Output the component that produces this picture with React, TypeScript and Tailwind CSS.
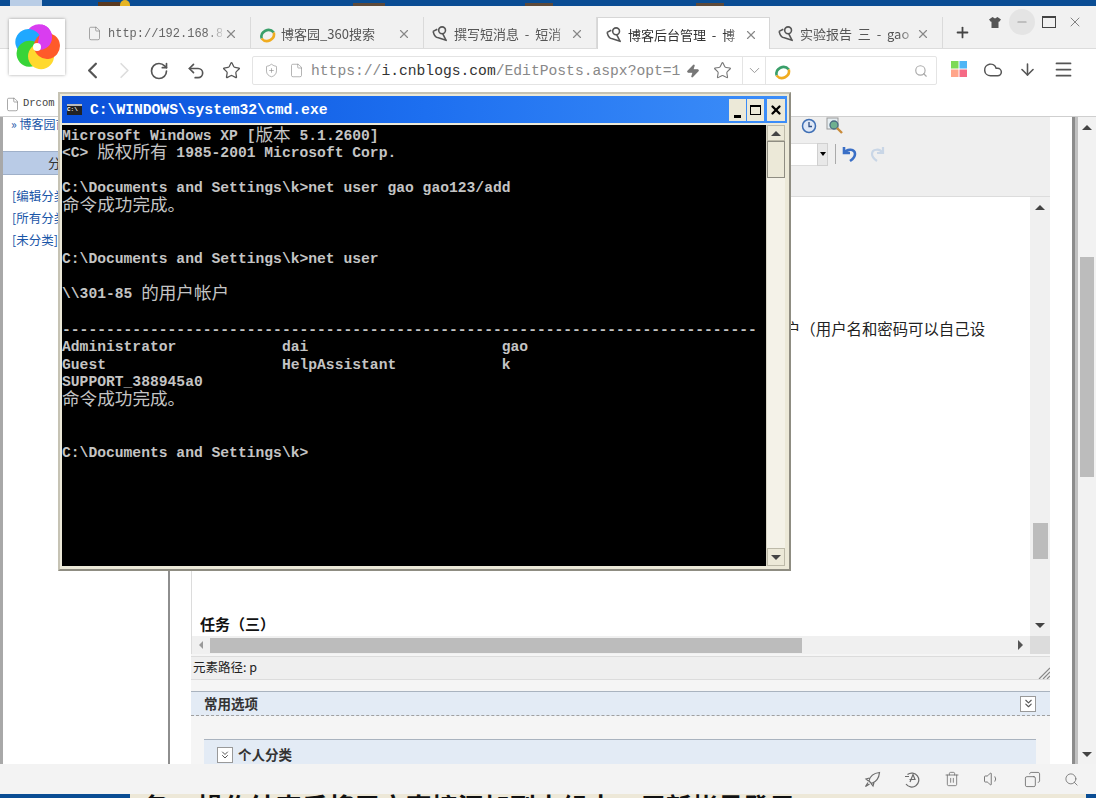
import { ArrowDown, ChevronDown, ChevronLeft, ChevronRight, ChevronsDown, Cloud, Copy, File, Menu, Minus, Plus, RotateCw, Search, ShieldPlus, Star, Trash2, Undo2, Volume1, X, Zap } from "lucide-react";
import type { ReactNode } from "react";

const cjk = "font-['Noto_Sans_CJK_SC',sans-serif]";

// swirl logo of the browser
const Logo = () => (
  <svg width="48" height="48" viewBox="-24 -24 48 48">
    <g transform="rotate(12)">
      {[
        ["#d93df0", 0],
        ["#1fa8ff", -72],
        ["#38d438", -144],
        ["#ffd92e", 144],
        ["#ff5a2a", 72],
      ].map(([c, a]) => (
        <circle key={c} cx="0" cy="-10" r="13" fill={c as string} transform={`rotate(${a})`} />
      ))}
      <path d="M0 -23 A13 13 0 0 1 0 3 Z" fill="#d93df0" />
    </g>
    <circle r="4" fill="#fff" />
  </svg>
);

const CnblogsIcon = () => (
  <svg width="17" height="17" viewBox="0 0 16 16" fill="none" stroke="#555" strokeWidth="1.5">
    <circle cx="9.5" cy="5" r="3.2" />
    <path d="M1 6 C2 10 4 12 6 12 L14 14.5" />
    <path d="M10 8 L13 14" />
    <path d="M1 6 L5 4" />
  </svg>
);

const SearchRing = ({ size = 18 }: { size?: number }) => (
  <svg width={size} height={size} viewBox="0 0 18 18" fill="none" strokeWidth="2.6">
    <path d="M3.6 13.5 A7 7 0 0 1 15.8 7.5" stroke="#3a9f6a" />
    <path d="M15.8 7.5 A7 7 0 0 1 3.6 13.5" stroke="#f0ac20" />
  </svg>
);

const Tab = ({ icon, title, active, mono }: { icon: ReactNode; title: string; active?: boolean; mono?: boolean }) => (
  <div className={`flex items-center w-[173px] h-[31px] shrink-0 pt-[2px] ${active ? "bg-white border border-b-0 border-[#d6d6d6] -mb-px h-[32px]" : "border-r border-[#dadada]"}`}>
    <div className="w-[30px] flex justify-center pl-[2px] shrink-0">{icon}</div>
    <div className={`w-[114px] overflow-hidden whitespace-pre [mask-image:linear-gradient(to_right,black_86%,rgba(0,0,0,0.25))] ${mono ? "font-['Liberation_Mono',monospace] text-[12px] text-[#666]" : `${cjk} text-[13px] ${active ? "text-[#333]" : "text-[#555]"}`}`}>
      {title}
    </div>
    <X size={14} className="ml-[2px] text-[#888] shrink-0" />
  </div>
);

const TopStrip = () => (
  <div className="flex items-end h-[6px] shrink-0 bg-[#0a4d94] overflow-hidden">
    <div className="ml-[10px] w-[32px] h-[6px] bg-[#b9cde6]" />
    <div className="ml-[56px] w-[22px] h-[4px] bg-[#5a3a20]" />
    <div className="w-[10px] h-[6px] bg-[#e6b422] rounded-t-full" />
    <div className="ml-[223px] w-[32px] h-[3px] bg-[#5e4a3a]" />
    <div className="ml-[140px] w-[28px] h-[3px] bg-[#5e4a3a]" />
    <div className="ml-[143px] w-[28px] h-[3px] bg-[#5e4a3a]" />
  </div>
);

const TabBar = () => (
  <div className="flex items-end h-[43px] shrink-0 pl-[78px] bg-[#f1f1f1] border-b border-[#dcdcdc]">
    <Tab mono title="http://192.168.8" icon={<File size={15} strokeWidth={1} className="text-[#777]" />} />
    <Tab title="博客园_360搜索" icon={<SearchRing />} />
    <Tab title="撰写短消息  -  短消" icon={<CnblogsIcon />} />
    <Tab active title="博客后台管理  -  博" icon={<CnblogsIcon />} />
    <Tab title="实验报告  三  -  gao" icon={<CnblogsIcon />} />
    <div className="w-[38px] h-[31px] flex justify-center items-center">
      <Plus size={17} strokeWidth={2.5} className="text-[#444]" />
    </div>
    <div className="flex items-center self-start mt-[3px] h-[26px] flex-1">
      <svg width="12" height="11" viewBox="0 0 12 11" className="ml-[8px]">
        <path d="M3.5 0 L6 1.5 L8.5 0 L12 2.5 L10 5 L9.5 4.5 V11 H2.5 V4.5 L2 5 L0 2.5Z" fill="#555" />
      </svg>
      <div className="ml-[8px] w-[26px] h-[26px] rounded-full bg-[#e4e4e4] flex items-center justify-center">
        <Minus size={14} className="text-[#999]" />
      </div>
      <div className="ml-[7px] w-[14px] h-[12px] border border-t-2 border-[#444]" />
      <X size={16} strokeWidth={1.2} className="ml-[11px] text-[#666]" />
    </div>
  </div>
);

const ToolBar = () => (
  <div className="flex items-center h-[43px] shrink-0 bg-white pl-[78px]">
    <div className="w-[28px] flex justify-center"><ChevronLeft size={27} strokeWidth={2} className="text-[#555]" /></div>
    <div className="w-[36px] flex justify-center"><ChevronRight size={27} strokeWidth={1.5} className="text-[#ddd]" /></div>
    <div className="w-[34px] flex justify-center"><RotateCw size={20} strokeWidth={2} className="text-[#555]" /></div>
    <div className="w-[40px] flex justify-center"><Undo2 size={20} strokeWidth={2} className="text-[#555]" /></div>
    <div className="w-[30px] flex justify-center"><Star size={19} strokeWidth={1.6} className="text-[#555]" /></div>
    <div className="ml-[6px] flex items-center h-[29px] w-[685px] border border-[#e4e4e4] rounded-[2px]">
      <ShieldPlus size={15} strokeWidth={1} className="ml-[11px] text-[#888]" />
      <File size={15} strokeWidth={1} className="ml-[10px] text-[#888]" />
      <div className="ml-[7px] w-[370px] whitespace-nowrap font-['Liberation_Mono',monospace] text-[14.67px] text-[#888]">
        https://<span className="text-[#333]">i.cnblogs.com</span>/EditPosts.aspx?opt=1
      </div>
      <Zap size={14} className="ml-[5px] text-[#777] fill-[#777]" />
      <Star size={19} strokeWidth={1.4} className="ml-[13px] text-[#777]" />
      <div className="ml-[10px] w-[24px] h-full shrink-0 border-x border-[#e4e4e4] flex items-center justify-center">
        <ChevronDown size={17} strokeWidth={1.4} className="text-[#999]" />
      </div>
      <div className="ml-[7px]"><SearchRing /></div>
      <Search size={14} className="ml-auto mr-[8px] text-[#aaa]" />
    </div>
    <svg width="16" height="16" viewBox="0 0 16 16" className="ml-[14px] -mt-[3px]">
      <rect width="7.5" height="7.5" fill="#7ed957" />
      <rect x="8.5" width="7.5" height="7.5" fill="#4fb5f5" />
      <rect y="8.5" width="7.5" height="7.5" fill="#ffa58a" />
      <rect x="8.5" y="8.5" width="7.5" height="7.5" fill="#f56a85" />
    </svg>
    <Cloud size={20} strokeWidth={1.8} className="ml-[16px] -mt-[2px] text-[#555]" />
    <ArrowDown size={19} strokeWidth={2} className="ml-[15px] -mt-[2px] text-[#555]" />
    <Menu size={21} strokeWidth={2} className="ml-[16px] -mt-[2px] text-[#555]" />
  </div>
);

const Sidebar = () => (
  <div className="w-[170px] shrink-0 border-l-[3px] border-r-2 border-l-[#a8a8a8] border-r-[#8e8e8e] bg-white">
    <div className={`h-[34px] pl-[8px] pt-px text-[12px] leading-[11px] text-[#1a56a8] ${cjk}`}>» 博客园首页</div>
    <div className={`h-[24px] pl-[45px] flex items-center bg-[#b9cbe6] border-y border-[#9fb0c9] text-[13px] text-[#333] ${cjk}`}>分类管理</div>
    <div className={`mt-[12px] pl-[9px] flex flex-col gap-[4px] text-[12.5px] leading-[18px] text-[#1a56a8] ${cjk}`}>
      <div>[编辑分类]</div>
      <div>[所有分类]</div>
      <div>[未分类]</div>
    </div>
  </div>
);

const EditorToolbar = () => (
  <div className="h-[80px] shrink-0 bg-[#efefef] border-b border-[#dcdcdc] flex flex-col items-end pr-[206px]">
    <div className="h-[17px] flex items-center">
      <div className="w-[5px] h-[16px] bg-[#9fb2c9] mr-[12px]" />
      <svg width="16" height="16" viewBox="0 0 16 16" fill="none" className="mr-[9px]">
        <circle cx="8" cy="8" r="6.5" fill="#dfe8f6" stroke="#3f6fb5" strokeWidth="1.5" />
        <path d="M8 4 V8.5 H11" stroke="#2f4f86" strokeWidth="1.3" />
      </svg>
      <svg width="18" height="18" viewBox="0 0 18 18" fill="none">
        <rect x="1" y="1" width="11" height="11" fill="#e6eef2" stroke="#999" />
        <circle cx="8" cy="8" r="4" fill="#6fb08f" stroke="#4a6a80" strokeWidth="1.3" />
        <path d="M11 11 L16 16" stroke="#c98b3a" strokeWidth="2.4" />
      </svg>
    </div>
    <div className="mt-[8px] h-[24px] flex items-center mr-[-42px]">
      <div className="w-[60px] h-[23px] bg-white border-y border-[#ddd]" />
      <div className="w-[11px] h-[23px] bg-[#e8e8e8] border border-[#d0d0d0] flex items-center justify-center">
        <div className="border-x-[3px] border-x-transparent border-t-[4px] border-t-black" />
      </div>
      <div className="ml-[7px] w-px h-[20px] bg-[#aaa]" />
      <svg width="18" height="18" viewBox="0 0 18 18" fill="none" className="ml-[5px]">
        <path d="M3 2 V8 H9 M3.5 8 C6 3 14 4 14 9 C14 12 12 14 9 16" stroke="#3a6fc6" strokeWidth="2.6" />
      </svg>
      <svg width="18" height="18" viewBox="0 0 18 18" fill="none" className="ml-[9px]">
        <path d="M15 2 V8 H9 M14.5 8 C12 3 4 4 4 9 C4 12 6 14 9 16" stroke="#c9d6e6" strokeWidth="2.2" />
      </svg>
    </div>
  </div>
);

const Arrow = ({ dir }: { dir: "up" | "down" | "left" | "right" }) => {
  if (dir === "up") return <div className="border-x-[5px] border-x-transparent border-b-[5px] border-b-[#444]" />;
  if (dir === "down") return <div className="border-x-[5px] border-x-transparent border-t-[5px] border-t-[#444]" />;
  if (dir === "left") return <div className="border-y-[4px] border-y-transparent border-r-[4px] border-r-[#999]" />;
  return <div className="border-y-[5px] border-y-transparent border-l-[5px] border-l-[#555]" />;
};

const Editor = () => (
  <div className="w-[859px] shrink-0 flex flex-col bg-[#f5f5f5] overflow-hidden">
    <EditorToolbar />
    <div className="h-[439px] shrink-0 flex border-l border-[#dcdcdc]">
      <div className={`flex-1 bg-white flex flex-col justify-between pt-[120px] pb-px ${cjk}`}>
        <div className="pl-[516px] whitespace-nowrap text-[15.4px] leading-[22px] text-[#222]">创建一个用户（用户名和密码可以自己设</div>
        <div className="pl-[8px] text-[15px] leading-[22px] font-bold text-[#111]">任务（三）</div>
      </div>
      <div className="w-[20px] shrink-0 bg-[#f0f0f0] flex flex-col items-center py-[8px]">
        <Arrow dir="up" />
        <div className="mt-[313px] w-[15px] h-[36px] bg-[#bcbcbc]" />
        <div className="mt-auto"><Arrow dir="down" /></div>
      </div>
    </div>
    <div className="h-[18px] shrink-0 flex items-center bg-[#f0f0f0] border-l border-[#dcdcdc]">
      <div className="w-[18px] flex justify-center"><Arrow dir="left" /></div>
      <div className="w-[592px] h-[15px] bg-[#bcbcbc]" />
      <div className="ml-auto mr-[7px]"><Arrow dir="right" /></div>
      <div className="w-[20px] h-full bg-[#dcdcdc]" />
    </div>
    <div className={`mt-[2px] h-[24px] shrink-0 flex items-center justify-between bg-[#efefef] border-y border-[#dcdcdc] text-[12.5px] text-[#222] ${cjk}`}>
      <span className="pl-[2px] -mt-[2px]">元素路径: p</span>
      <svg width="12" height="12" viewBox="0 0 12 12" stroke="#888" strokeWidth="1.2" className="self-end">
        <path d="M1 12 L12 1 M5 12 L12 5 M9 12 L12 9" />
      </svg>
    </div>
    <div className={`mt-[11px] h-[25px] shrink-0 flex items-center justify-between bg-[#e3ebf5] border-y border-dashed [border-top-style:solid] border-t-[#a9b3bf] border-b-[#a0a0a0] pl-[13px] pr-[14px] text-[13.5px] font-bold text-[#333] ${cjk}`}>
      <span>常用选项</span>
      <span className="w-[16px] h-[16px] bg-white border border-[#999] flex items-center justify-center">
        <ChevronsDown size={13} className="text-[#555]" />
      </span>
    </div>
    <div className={`mt-[23px] ml-[13px] mr-[14px] flex-1 flex items-start gap-[5px] pl-[13px] pt-[7px] bg-[#e3ebf5] border-t border-[#a9b3bf] text-[13.5px] leading-[17px] font-bold text-[#333] overflow-hidden ${cjk}`}>
      <span className="w-[16px] h-[16px] shrink-0 bg-white border border-[#999] flex items-center justify-center">
        <ChevronsDown size={12} className="text-[#555]" />
      </span>
      <span className="-mt-px">个人分类</span>
    </div>
  </div>
);

const PageScrollbar = () => (
  <>
    <div className="flex-1 bg-white" />
    <div className="w-[3px] shrink-0 bg-[#8c8c8c]" />
    <div className="w-[3px] shrink-0 bg-[#c0c0c0]" />
    <div className="w-[18px] shrink-0 bg-[#f2f2f2] flex flex-col items-center pt-[8px] pb-[7px]">
      <Arrow dir="up" />
      <div className="mt-[127px] w-[14px] h-[220px] bg-[#bcbcbc]" />
      <div className="mt-auto"><Arrow dir="down" /></div>
    </div>
  </>
);

const StatusBar = () => (
  <div className="h-[30px] shrink-0 bg-[#f3f3f3] flex items-center justify-end gap-[23px] pr-[17px] text-[#6b6b6b]">
    <svg width="17" height="17" viewBox="0 0 17 17" fill="none" stroke="currentColor" strokeWidth="1.2">
      <path d="M15.5 1.5 C10 2 6 5 5 10 L7.5 12.5 C12 11 15 7 15.5 1.5Z M5.5 7 L2 8 L4.5 10 M10 11.5 L9 15 L7 12.5 M4 11.5 L1.5 15.5 L5.5 13" />
    </svg>
    <svg width="17" height="17" viewBox="0 0 17 17" fill="none" stroke="currentColor" strokeWidth="1.2">
      <path d="M2 13 A7 7 0 1 0 3.5 3.5 M6 11 L9 3.5 L11 8.5 H5.5 M1 5.5 H5" />
    </svg>
    <Trash2 size={16} strokeWidth={1.2} />
    <Volume1 size={18} strokeWidth={1.2} />
    <Copy size={17} strokeWidth={1.2} className="-scale-x-100" />
    <Search size={15} strokeWidth={1.3} />
  </div>
);

// the bold document text that shows through under the browser window
const BottomStrip = () => (
  <div className="h-[4px] shrink-0 flex overflow-hidden bg-[#0a4d94]">
    <div className={`ml-[130px] w-[956px] h-[4px] bg-[#ede8d8] overflow-hidden whitespace-nowrap text-[26px] leading-[24px] font-bold text-[#111] pl-[12px] ${cjk}`}>
      务3. 操作结束后将用户直接添加到本组中，用新帐号登录。
    </div>
  </div>
);

function C({ children }: { children: ReactNode }) {
  return <span className={`${cjk} font-normal text-[17.6px] leading-[0] relative top-px`}>{children}</span>;
}

const lines: ReactNode[] = [
  <>Microsoft Windows XP [<C>版本</C> 5.1.2600]</>,
  <>{"<C> "}<C>版权所有</C> 1985-2001 Microsoft Corp.</>,
  "",
  "C:\\Documents and Settings\\k>net user gao gao123/add",
  <C>命令成功完成。</C>,
  "",
  "",
  "C:\\Documents and Settings\\k>net user",
  "",
  <>\\301-85 <C>的用户帐户</C></>,
  "",
  "-".repeat(79),
  "Administrator            dai                      gao",
  "Guest                    HelpAssistant            k",
  "SUPPORT_388945a0",
  <C>命令成功完成。</C>,
  "",
  "",
  "C:\\Documents and Settings\\k>",
];

const CmdWindow = () => (
  <div className="absolute left-[58px] top-[92px] w-[733px] h-[479px] flex flex-col bg-[#ece9d8] border-2 border-[#c6c3b4] border-r-[#8f8d82] border-b-[#8f8d82] px-[2px] pb-[3px] pt-[2px] font-['Liberation_Mono',monospace]">
    <div className="h-[27px] shrink-0 flex items-center pl-[5px] pr-[2px] bg-gradient-to-r from-[#0a4fd8] via-[#1d6ff0] to-[#3d8ef8]">
      <div className="w-[15px] h-[11px] bg-[#222] border-t-2 border-[#bbb] text-[6px] leading-[8px] text-white font-bold">C:\</div>
      <span className="ml-[8px] text-[14.67px] font-bold text-white">C:\WINDOWS\system32\cmd.exe</span>
      <div className="ml-auto w-[17px] h-[22px] bg-[#ece9d8] flex items-end justify-center pb-[3px]"><div className="w-[7px] h-[3px] bg-black" /></div>
      <div className="ml-px w-[17px] h-[22px] bg-[#ece9d8] flex items-center justify-center"><div className="w-[11px] h-[10px] border border-t-2 border-black" /></div>
      <div className="ml-[3px] w-[18px] h-[22px] bg-[#ece9d8] flex items-center justify-center"><X size={14} strokeWidth={4} className="text-black" /></div>
    </div>
    <div className="flex-1 flex mt-[2px] mr-[2px] min-h-0">
      <div className="w-[704px] bg-black pt-[2.5px] overflow-hidden text-[14.67px] font-bold text-[#c4c4c4] whitespace-pre">
        {lines.map((line, i) => (
          <div key={i} className="h-[17.65px] leading-[17.65px]">{line}</div>
        ))}
      </div>
      <div className="flex-1 flex flex-col bg-[#f4f2e8] border-l border-[#d8d5c6]">
        <div className="h-[16px] bg-[#ece9d8] border border-[#bdbaa9] flex items-center justify-center"><Arrow dir="up" /></div>
        <div className="h-[37px] bg-[#ece9d8] border border-[#8f8d82]" />
        <div className="mt-auto h-[18px] bg-[#ece9d8] border border-[#bdbaa9] flex items-center justify-center"><Arrow dir="down" /></div>
      </div>
    </div>
  </div>
);

export default function App() {
  return (
    <div className="relative w-[1096px] h-[798px] overflow-hidden bg-white flex flex-col">
      <TopStrip />
      <TabBar />
      <ToolBar />
      <div className="h-[25px] shrink-0 flex items-center pl-[5px] gap-[3px] bg-white border-b border-[#cfcfcf]">
        <File size={15} strokeWidth={1} className="text-[#777]" />
        <span className="font-['Liberation_Mono',monospace] text-[10.5px] text-[#444]">Drcom</span>
      </div>
      <div className="h-[647px] shrink-0 flex overflow-hidden">
        <Sidebar />
        <div className="w-[21px] shrink-0 bg-white" />
        <Editor />
        <PageScrollbar />
      </div>
      <StatusBar />
      <BottomStrip />
      <div className="absolute left-[9px] top-[19px] w-[56px] h-[56px] bg-white shadow-[0_0_3px_rgba(0,0,0,0.35)] flex items-center justify-center">
        <Logo />
      </div>
      <CmdWindow />
    </div>
  );
}
